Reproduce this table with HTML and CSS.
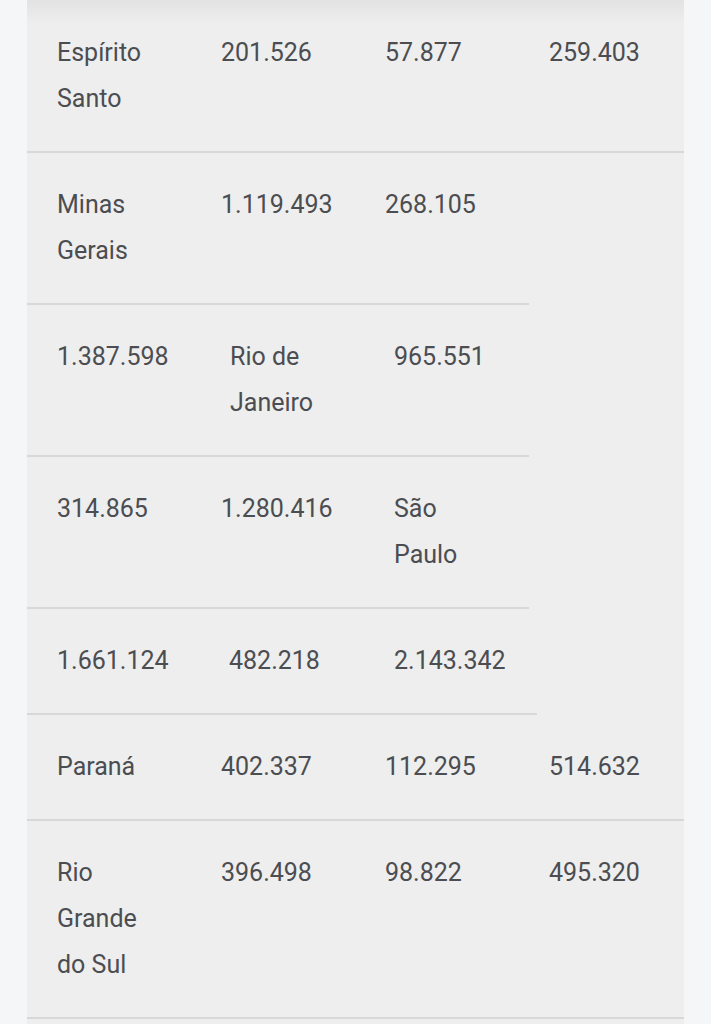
FILE: index.html
```html
<!DOCTYPE html>
<html lang="pt-BR">
<head>
    <meta charset="UTF-8">
    <meta name="viewport" content="width=device-width, initial-scale=1.0">
    <title>Produção por estado</title>
    <link rel="stylesheet" href="styles.css">
</head>
<body>
    <div class="panel">
        <div class="row row-first">
            <div class="cell">Espírito Santo</div>
            <div class="cell">201.526</div>
            <div class="cell">57.877</div>
            <div class="cell">259.403</div>
        </div>
        <div class="row row-part">
            <div class="cell">Minas Gerais</div>
            <div class="cell">1.119.493</div>
            <div class="cell">268.105</div>
        </div>
        <div class="row row-part cols-a">
            <div class="cell">1.387.598</div>
            <div class="cell">Rio de Janeiro</div>
            <div class="cell">965.551</div>
        </div>
        <div class="row row-part cols-b">
            <div class="cell">314.865</div>
            <div class="cell">1.280.416</div>
            <div class="cell">São Paulo</div>
        </div>
        <div class="row row-part row-wide cols-c">
            <div class="cell">1.661.124</div>
            <div class="cell">482.218</div>
            <div class="cell">2.143.342</div>
        </div>
        <div class="row">
            <div class="cell">Paraná</div>
            <div class="cell">402.337</div>
            <div class="cell">112.295</div>
            <div class="cell">514.632</div>
        </div>
        <div class="row">
            <div class="cell">Rio Grande do Sul</div>
            <div class="cell">396.498</div>
            <div class="cell">98.822</div>
            <div class="cell">495.320</div>
        </div>
    </div>
</body>
</html>
```
FILE: styles.css
```css
body {
    margin: 0;
    background-color: #f5f6f8;
    font-family: Roboto, "Noto Sans", sans-serif;
    font-size: 25px;
    line-height: 46px;
    color: #4b4d51;
}
.panel {
    position: relative;
    margin-left: 27px;
    width: 657px;
    min-height: 1024px;
    background-color: #eeeeee;
}
.panel::before {
    content: "";
    position: absolute;
    top: 0;
    left: 0;
    right: 0;
    height: 24px;
    background: linear-gradient(#e2e2e2, rgba(238, 238, 238, 0));
}
.row {
    display: grid;
    grid-template-columns: 164px 164px 164px 1fr;
    padding: 29px 0;
    border-bottom: 2px solid #d8d8d8;
}
.row-first {
    padding-top: 30px;
}
.cell {
    padding-left: 30px;
    padding-right: 30px;
}
.row-part {
    width: 502px;
    grid-template-columns: 164px 164px 1fr;
}
.row-wide {
    width: 510px;
}
.cols-a {
    grid-template-columns: 173px 164px 1fr;
}
.cols-b {
    grid-template-columns: 164px 173px 1fr;
}
.cols-c {
    grid-template-columns: 172px 165px 1fr;
}
```
